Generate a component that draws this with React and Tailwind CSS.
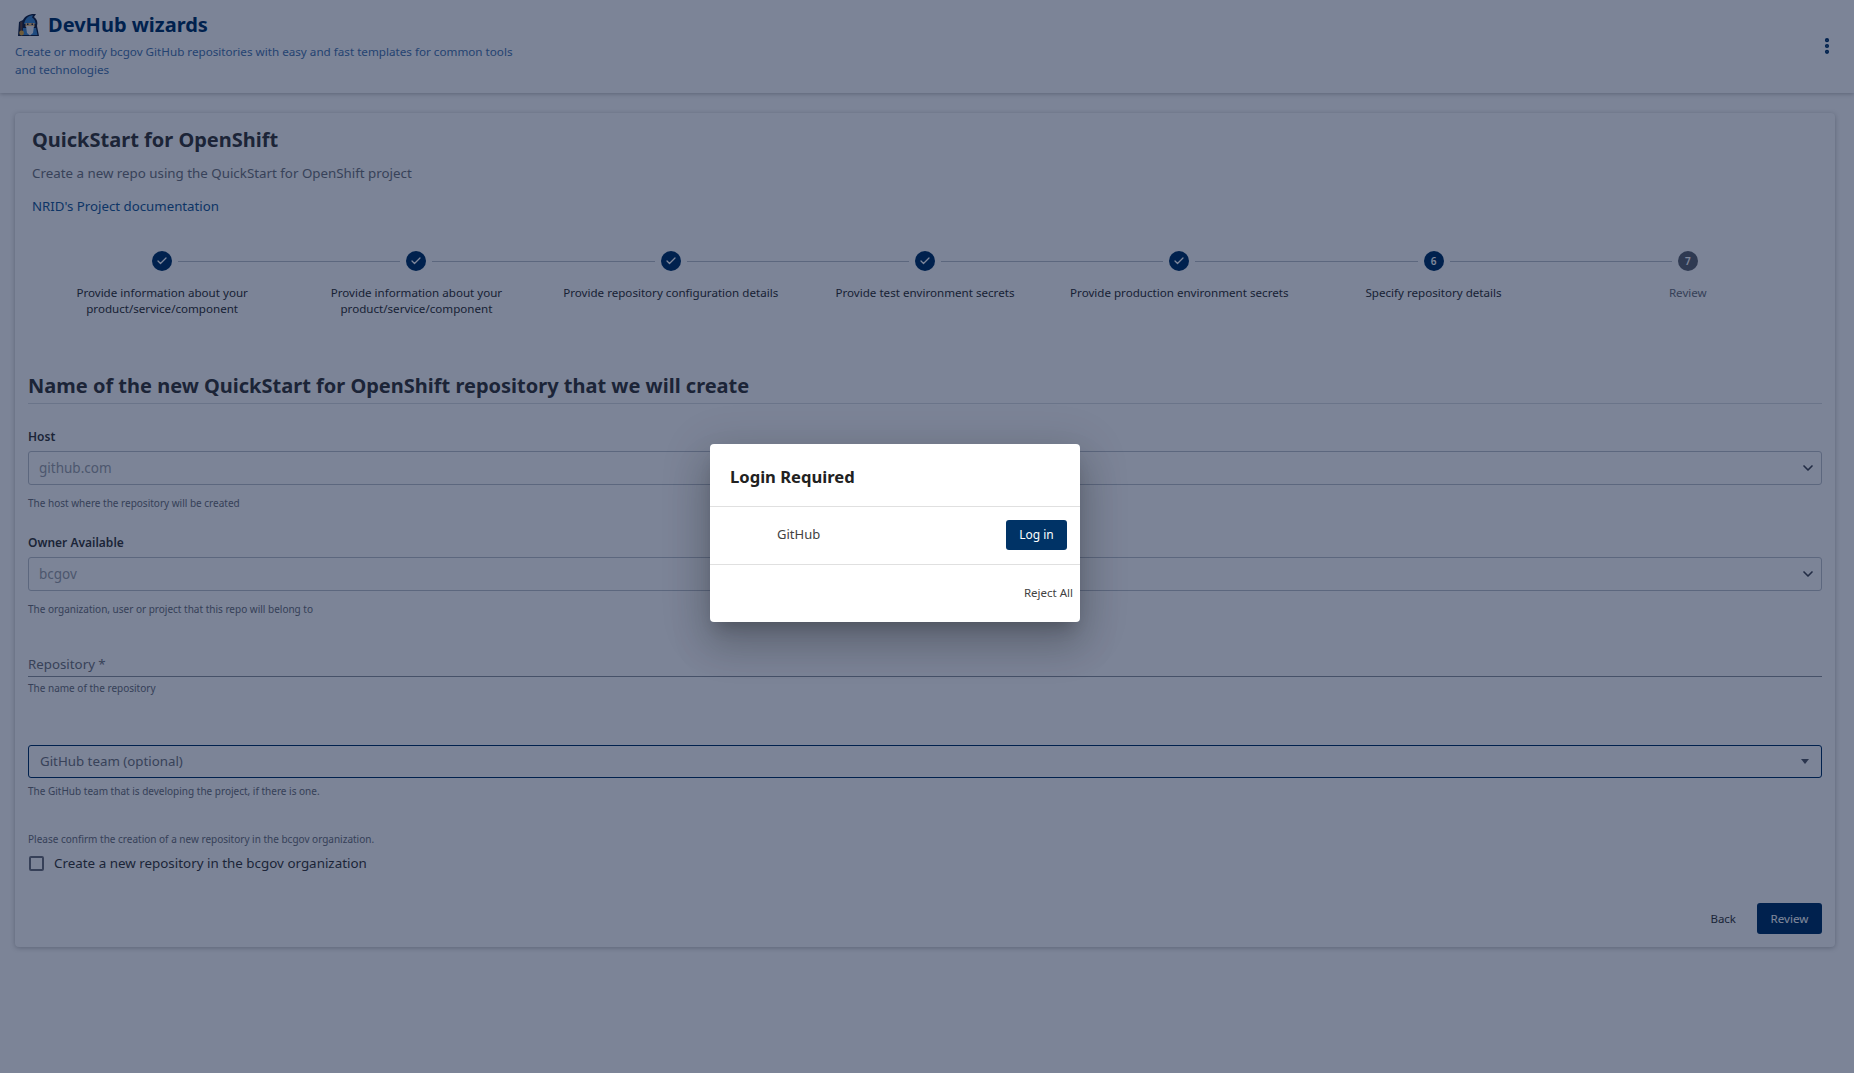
import React from "react";
import { Check, ChevronDown, EllipsisVertical } from "lucide-react";

const steps = [
    { label: "Provide information about your\nproduct/service/component", done: true },
    { label: "Provide information about your\nproduct/service/component", done: true },
    { label: "Provide repository configuration details", done: true },
    { label: "Provide test environment secrets", done: true },
    { label: "Provide production environment secrets", done: true },
    { label: "Specify repository details", active: true, n: 6 },
    { label: "Review", n: 7 },
];

function WizardIcon() {
    return (
        <svg viewBox="0 0 24 24" className="w-[24px] h-[24px] shrink-0">
            {/* dark outline */}
            <path d="M1 23 L2 9 L6 7 C8 3 12 0.5 19 1 L17 4 C20 6 21 9 20 13 L22 23 Z" fill="#14233f" />
            {/* hat and robe */}
            <path d="M7 11 C8 6 11 2.5 16 2.3 L15 4.5 C17.5 6 18.8 8.5 18.5 11 Z" fill="#3f87c9" />
            <path d="M6 15 L19 15 L20.5 22 L6 22 Z" fill="#3f87c9" />
            {/* face and beard */}
            <rect x="8.5" y="10" width="9" height="4" fill="#e3bd83" />
            <rect x="10" y="10.5" width="1.5" height="1.5" fill="#14233f" />
            <rect x="14.5" y="10.5" width="1.5" height="1.5" fill="#14233f" />
            <path d="M9 13 L17 13 L16 20 L13 22.5 L10 20 Z" fill="#e8ecf2" />
            {/* staff */}
            <rect x="3.2" y="8.5" width="2.2" height="10" fill="#5d4238" />
            <circle cx="4.6" cy="20" r="2.4" fill="#e0a83c" />
        </svg>
    );
}

function Step({ step, index }) {
    const first = index === 0;
    const last = index === steps.length - 1;
    return (
        <div className="flex-1 min-w-0 flex flex-col items-center">
            <div className="w-full flex items-center gap-[6px]">
                <div className={`flex-1 h-px ${first ? "" : "bg-[#b9bec7]"}`} />
                <div
                    className={`w-[20px] h-[20px] rounded-full flex items-center justify-center text-[10px] font-semibold text-white ${
                        step.done || step.active ? "bg-[#003366]" : "bg-[#5e646e]"
                    }`}
                >
                    {step.done ? <Check className="w-[12px] h-[12px]" strokeWidth={2.5} /> : step.n}
                </div>
                <div className={`flex-1 h-px ${last ? "" : "bg-[#b9bec7]"}`} />
            </div>
            <div
                className={`mt-[14px] text-center whitespace-pre-line text-[11.6px] leading-[16px] ${
                    step.n === 7 ? "text-[#6d717a]" : "text-[#333333]"
                }`}
            >
                {step.label}
            </div>
        </div>
    );
}

function DisabledSelect({ label, value, help }) {
    return (
        <div>
            <div className="h-[16px] text-[12px] leading-[16px] font-semibold text-[#383838]">{label}</div>
            <div className="mt-[6px] h-[34px] flex items-center justify-between pl-[10px] pr-[5px] rounded-[3px] border border-[#b9bec7] text-[13.5px] text-[#9a9ea6]">
                <span>{value}</span>
                <ChevronDown className="w-[16px] h-[16px] text-[#444954]" strokeWidth={2.5} />
            </div>
            <div className="mt-[11px] h-[14px] text-[10px] leading-[14px] text-[#6d717a]">{help}</div>
        </div>
    );
}

export default function App() {
    return (
        <div
            className="relative min-h-screen bg-[#f8f8f8] overflow-hidden"
            style={{ fontFamily: '"Noto Sans", sans-serif' }}
        >
            {/* Header */}
            <header className="h-[93px] pl-[15px] pr-[17px] pt-[13px] flex justify-between items-start bg-[#f8f8f8] shadow-[0_1px_4px_rgba(0,0,0,0.25)]">
                <div className="w-[520px]">
                    <div className="flex items-center h-[24px] pl-[2px] gap-[7px]">
                        <WizardIcon />
                        <h1 className="text-[20px] leading-[24px] font-bold text-[#003366]">DevHub wizards</h1>
                    </div>
                    <p className="mt-[6px] text-[11.67px] leading-[18px] text-[#4a76ad]">
                        Create or modify bcgov GitHub repositories with easy and fast templates for common tools and technologies
                    </p>
                </div>
                <EllipsisVertical className="mt-[23px] w-[20px] h-[20px] text-[#003366]" strokeWidth={3} />
            </header>

            {/* Wizard card */}
            <main className="pl-[15px] pr-[19px] pt-[20px]">
                <div className="h-[834px] rounded-[4px] bg-[#f8f8f8] shadow-[0_1px_5px_rgba(0,0,0,0.25)]">
                    <div className="pl-[17px] pt-[12px]">
                        <h2 className="h-[30px] text-[20px] leading-[30px] font-bold text-[#383838]">QuickStart for OpenShift</h2>
                        <p className="mt-[8px] h-[20px] text-[13.33px] leading-[20px] text-[#70747c]">
                            Create a new repo using the QuickStart for OpenShift project
                        </p>
                        <a className="block mt-[13px] h-[20px] text-[13.25px] leading-[20px] text-[#1a5a96]">
                            NRID's Project documentation
                        </a>
                    </div>

                    <div className="mt-[35px] ml-[20px] mr-[20px] h-[80px] flex">
                        {steps.map((step, i) => (
                            <Step key={i} step={step} index={i} />
                        ))}
                    </div>

                    <div className="pl-[13px] pr-[13px] mt-[41px]">
                        <div className="h-[32px] border-b border-[#d5d8dd]">
                            <h3 className="text-[20px] leading-[28px] font-bold text-[#383838]">
                                Name of the new QuickStart for OpenShift repository that we will create
                            </h3>
                        </div>

                        <div className="mt-[25px]">
                            <DisabledSelect label="Host" value="github.com" help="The host where the repository will be created" />
                        </div>
                        <div className="mt-[25px]">
                            <DisabledSelect label="Owner Available" value="bcgov" help="The organization, user or project that this repo will belong to" />
                        </div>

                        <div className="mt-[36px] h-[25px] border-b border-[#8d929b] text-[13.3px] leading-[24px] text-[#70747c]">
                            Repository *
                        </div>
                        <div className="mt-[4px] h-[14px] text-[10px] leading-[14px] text-[#6d717a]">The name of the repository</div>

                        <div className="mt-[50px] h-[33px] flex items-center justify-between pl-[11px] pr-[12px] rounded-[3px] border border-[#003366] text-[13.3px] text-[#70747c]">
                            <span>GitHub team (optional)</span>
                            <span className="w-0 h-0 border-x-[4px] border-x-transparent border-t-[5px] border-t-[#555a66]" />
                        </div>
                        <div className="mt-[6px] h-[14px] text-[10px] leading-[14px] text-[#6d717a]">
                            The GitHub team that is developing the project, if there is one.
                        </div>

                        <div className="mt-[34px] h-[14px] text-[10px] leading-[14px] text-[#6d717a]">
                            Please confirm the creation of a new repository in the bcgov organization.
                        </div>
                        <div className="mt-[6px] h-[22px] flex items-center">
                            <span className="ml-[1px] w-[15px] h-[15px] rounded-[2px] border-2 border-[#6d717a]" />
                            <span className="ml-[10px] text-[13.4px] text-[#383838]">Create a new repository in the bcgov organization</span>
                        </div>

                        <div className="mt-[29px] flex justify-end items-center">
                            <button className="mr-[21px] text-[11.5px] text-[#383838]">Back</button>
                            <button className="w-[65px] h-[31px] rounded-[3px] bg-[#003366] text-[11.6px] text-white">Review</button>
                        </div>
                    </div>
                </div>
            </main>

            {/* Backdrop */}
            <div className="absolute inset-0 bg-[rgba(0,16,54,0.5)]" />

            {/* Login dialog */}
            <div className="absolute left-[710px] top-[444px] w-[370px] h-[178px] rounded-[4px] bg-white shadow-[0_11px_15px_-7px_rgba(0,0,0,0.2),0_24px_38px_3px_rgba(0,0,0,0.14),0_9px_46px_8px_rgba(0,0,0,0.12)]">
                <div className="h-[63px] pl-[20px] pt-[18px] border-b border-[#e0e0e0]">
                    <h2 className="text-[16.6px] leading-[30px] font-bold text-[#212121]">Login Required</h2>
                </div>
                <div className="h-[58px] flex items-center justify-between pl-[67px] pr-[13px] pb-[1px] border-b border-[#e0e0e0]">
                    <span className="text-[13px] text-[#424242]">GitHub</span>
                    <button className="w-[61px] h-[30px] rounded-[3px] bg-[#003366] text-[12px] text-white">Log in</button>
                </div>
                <div className="h-[57px] flex items-center justify-end pr-[7px] pb-[2px]">
                    <button className="text-[11.5px] text-[#424242]">Reject All</button>
                </div>
            </div>
        </div>
    );
}
